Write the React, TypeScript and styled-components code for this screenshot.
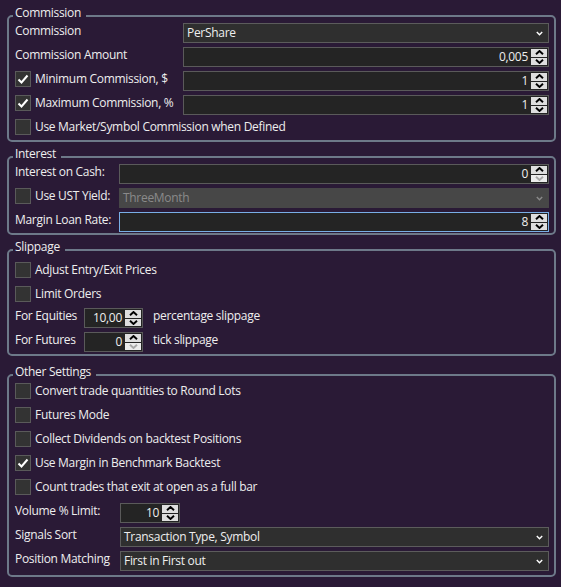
import React from 'react';
import styled, { createGlobalStyle } from 'styled-components';

const BG = '#2a1a36';

const Global = createGlobalStyle`
  html, body { margin: 0; padding: 0; background: ${BG}; }
  body {
    font-family: "Open Sans", "Noto Sans", sans-serif;
    font-size: 12px;
    letter-spacing: -0.3px;
    color: #eeeeee;
  }
  * { box-sizing: border-box; }
`;

const Page = styled.div`
  display: flex;
  flex-direction: column;
  padding: 15px 5px 9px 7px;
  width: 561px;
  height: 587px;
`;

const Group = styled.section<{ $mt?: number; $pb?: number }>`
  display: flex;
  flex-direction: column;
  gap: 4px;
  margin-top: ${(p) => p.$mt ?? 0}px;
  padding: 0 5px ${(p) => p.$pb ?? 1}px 6px;
  border: 2px solid #6d7989;
  border-radius: 5px;
`;

const Title = styled.div<{ $mb: number }>`
  align-self: flex-start;
  margin: -12px 0 ${(p) => p.$mb}px -2px;
  padding: 0 5px 0 2px;
  line-height: 16px;
  background: ${BG};
  white-space: nowrap;
`;

const Row = styled.div<{ $mt?: number }>`
  display: flex;
  align-items: flex-start;
  height: 20px;
  margin-top: ${(p) => p.$mt ?? 0}px;
`;

const LabelCell = styled.div<{ $w?: number }>`
  display: flex;
  align-items: flex-start;
  gap: 4px;
  flex: 0 0 ${(p) => (p.$w ? `${p.$w}px` : 'auto')};
  white-space: nowrap;
`;

const Label = styled.span`
  line-height: 16px;
  white-space: nowrap;
`;

const Side = styled.span`
  line-height: 16px;
  margin-left: 10px;
  white-space: nowrap;
`;

const Box = styled.div`
  width: 16px;
  height: 16px;
  flex: 0 0 16px;
  background: #333333;
  border: 1px solid #5a5a5a;
  display: flex;
  align-items: center;
  justify-content: center;
`;

const Combo = styled.div<{ $disabled?: boolean }>`
  flex: 1;
  height: 20px;
  display: flex;
  align-items: center;
  justify-content: space-between;
  padding: 0 5px 0 3px;
  background: ${(p) => (p.$disabled ? '#474747' : '#2f2f2f')};
  border: 1px solid ${(p) => (p.$disabled ? '#474747' : '#5c5c5c')};
  color: ${(p) => (p.$disabled ? '#8a8a8a' : '#eeeeee')};
  line-height: 18px;
`;

const Num = styled.div<{ $focus?: boolean; $w?: number }>`
  flex: ${(p) => (p.$w ? `0 0 ${p.$w}px` : '1')};
  height: 20px;
  display: flex;
  background: #242424;
  border: 1px solid ${(p) => (p.$focus ? '#79aee6' : '#5a5a5a')};
`;

const NumText = styled.div`
  flex: 1;
  text-align: right;
  padding-right: 3px;
  line-height: 18px;
`;

const Spinner = styled.div`
  display: flex;
  flex-direction: column;
  gap: 1px;
  width: 16px;
  margin: 1px 1px 1px 0;
`;

const SpinBtn = styled.div<{ $disabled?: boolean }>`
  flex: 1;
  display: flex;
  align-items: center;
  justify-content: center;
  background: ${(p) => (p.$disabled ? '#ececec' : '#dedede')};
`;

const Chev = ({ up, color }: { up?: boolean; color: string }) => (
  <svg width="9" height="5" viewBox="0 0 9 5">
    <polyline
      points={up ? '1,4.3 4.5,1 8,4.3' : '1,0.7 4.5,4 8,0.7'}
      fill="none"
      stroke={color}
      strokeWidth="1.9"
    />
  </svg>
);

const Check = ({ checked }: { checked?: boolean }) => (
  <Box>
    {checked && (
      <svg width="14" height="14" viewBox="0 0 14 14">
        <polyline points="2.5,7.5 5.5,10.5 11.5,3.5" fill="none" stroke="#ffffff" strokeWidth="2" />
      </svg>
    )}
  </Box>
);

const Select = ({ value, disabled }: { value: string; disabled?: boolean }) => (
  <Combo $disabled={disabled}>
    <span>{value}</span>
    <svg width="7" height="5" viewBox="0 0 7 5">
      <polyline points="0.8,1 3.5,3.8 6.2,1" fill="none" stroke={disabled ? '#8a8a8a' : '#ffffff'} strokeWidth="1.4" />
    </svg>
  </Combo>
);

const NumInput = ({
  value,
  w,
  focus,
  downDisabled,
}: {
  value: string;
  w?: number;
  focus?: boolean;
  downDisabled?: boolean;
}) => (
  <Num $w={w} $focus={focus}>
    <NumText>{value}</NumText>
    <Spinner>
      <SpinBtn>
        <Chev up color="#000000" />
      </SpinBtn>
      <SpinBtn $disabled={downDisabled}>
        <Chev color={downDisabled ? '#a8a8a8' : '#000000'} />
      </SpinBtn>
    </Spinner>
  </Num>
);

export default function App() {
  return (
    <>
      <Global />
      <Page>
        <Group>
          <Title $mb={-2}>Commission</Title>
          <Row>
            <LabelCell $w={168}>
              <Label>Commission</Label>
            </LabelCell>
            <Select value="PerShare" />
          </Row>
          <Row>
            <LabelCell $w={168}>
              <Label>Commission Amount</Label>
            </LabelCell>
            <NumInput value="0,005" />
          </Row>
          <Row>
            <LabelCell $w={168}>
              <Check checked />
              <Label>Minimum Commission, $</Label>
            </LabelCell>
            <NumInput value="1" />
          </Row>
          <Row>
            <LabelCell $w={168}>
              <Check checked />
              <Label>Maximum Commission, %</Label>
            </LabelCell>
            <NumInput value="1" />
          </Row>
          <Row>
            <LabelCell>
              <Check />
              <Label>Use Market/Symbol Commission when Defined</Label>
            </LabelCell>
          </Row>
        </Group>

        <Group $mt={14}>
          <Title $mb={-2}>Interest</Title>
          <Row>
            <LabelCell $w={104}>
              <Label>Interest on Cash:</Label>
            </LabelCell>
            <NumInput value="0" downDisabled />
          </Row>
          <Row>
            <LabelCell $w={104}>
              <Check />
              <Label>Use UST Yield:</Label>
            </LabelCell>
            <Select value="ThreeMonth" disabled />
          </Row>
          <Row>
            <LabelCell $w={104}>
              <Label>Margin Loan Rate:</Label>
            </LabelCell>
            <NumInput value="8" focus />
          </Row>
        </Group>

        <Group $mt={14} $pb={2}>
          <Title $mb={3}>Slippage</Title>
          <Row>
            <LabelCell>
              <Check />
              <Label>Adjust Entry/Exit Prices</Label>
            </LabelCell>
          </Row>
          <Row>
            <LabelCell>
              <Check />
              <Label>Limit Orders</Label>
            </LabelCell>
          </Row>
          <Row $mt={-2}>
            <LabelCell $w={69}>
              <Label>For Equities</Label>
            </LabelCell>
            <NumInput value="10,00" w={59} />
            <Side>percentage slippage</Side>
          </Row>
          <Row>
            <LabelCell $w={69}>
              <Label>For Futures</Label>
            </LabelCell>
            <NumInput value="0" w={59} downDisabled />
            <Side>tick slippage</Side>
          </Row>
        </Group>

        <Group $mt={18} $pb={4}>
          <Title $mb={-1}>Other Settings</Title>
          <Row>
            <LabelCell>
              <Check />
              <Label>Convert trade quantities to Round Lots</Label>
            </LabelCell>
          </Row>
          <Row>
            <LabelCell>
              <Check />
              <Label>Futures Mode</Label>
            </LabelCell>
          </Row>
          <Row>
            <LabelCell>
              <Check />
              <Label>Collect Dividends on backtest Positions</Label>
            </LabelCell>
          </Row>
          <Row>
            <LabelCell>
              <Check checked />
              <Label>Use Margin in Benchmark Backtest</Label>
            </LabelCell>
          </Row>
          <Row>
            <LabelCell>
              <Check />
              <Label>Count trades that exit at open as a full bar</Label>
            </LabelCell>
          </Row>
          <Row>
            <LabelCell $w={105}>
              <Label>Volume % Limit:</Label>
            </LabelCell>
            <NumInput value="10" w={60} />
          </Row>
          <Row>
            <LabelCell $w={105}>
              <Label>Signals Sort</Label>
            </LabelCell>
            <Select value="Transaction Type, Symbol" />
          </Row>
          <Row>
            <LabelCell $w={105}>
              <Label>Position Matching</Label>
            </LabelCell>
            <Select value="First in First out" />
          </Row>
        </Group>
      </Page>
    </>
  );
}
